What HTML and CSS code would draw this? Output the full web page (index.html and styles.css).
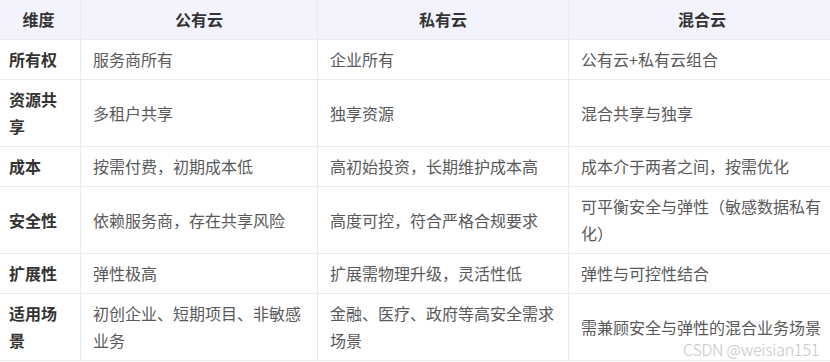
FILE: index.html
```html
<!DOCTYPE html>
<html lang="zh-CN">
<head>
<meta charset="utf-8">
<link rel="stylesheet" href="styles.css">
</head>
<body>
<div class="wrap">
<table class="cmp">
  <colgroup>
    <col class="c1"><col class="c2"><col class="c3"><col class="c4">
  </colgroup>
  <thead>
    <tr><th>维度</th><th>公有云</th><th>私有云</th><th>混合云</th></tr>
  </thead>
  <tbody>
    <tr><td class="key">所有权</td><td>服务商所有</td><td>企业所有</td><td>公有云+私有云组合</td></tr>
    <tr><td class="key">资源共享</td><td>多租户共享</td><td>独享资源</td><td>混合共享与独享</td></tr>
    <tr><td class="key">成本</td><td>按需付费，初期成本低</td><td>高初始投资，长期维护成本高</td><td>成本介于两者之间，按需优化</td></tr>
    <tr><td class="key">安全性</td><td>依赖服务商，存在共享风险</td><td>高度可控，符合严格合规要求</td><td>可平衡安全与弹性（敏感数据私有化）</td></tr>
    <tr><td class="key">扩展性</td><td>弹性极高</td><td>扩展需物理升级，灵活性低</td><td>弹性与可控性结合</td></tr>
    <tr><td class="key">适用场景</td><td>初创企业、短期项目、非敏感业务</td><td>金融、医疗、政府等高安全需求场景</td><td>需兼顾安全与弹性的混合业务场景</td></tr>
  </tbody>
</table>
<div class="watermark">CSDN @weisian151</div>
</div>
</body>
</html>
```
FILE: styles.css
```css
html, body {
  margin: 0;
  padding: 0;
  background: #ffffff;
  overflow: hidden;
}
body {
  font-family: "Noto Sans CJK SC", "Noto Sans", sans-serif;
  font-size: 16px;
}
.wrap {
  position: relative;
  width: 830px;
  height: 362px;
  overflow: hidden;
}
.cmp {
  border-collapse: collapse;
  table-layout: fixed;
  width: 839px;
  margin-left: -4px;
}
.c1 { width: 84px; }
.c2 { width: 237px; }
.c3 { width: 251px; }
.c4 { width: 267px; }
.cmp th, .cmp td {
  padding: 6px 12px;
  line-height: 27px;
  border: 1px solid #e9e9f1;
  vertical-align: middle;
  text-align: left;
}
.cmp tr:first-child th { border-top: none; }
.cmp th {
  background: #f3f3fd;
  color: #333333;
  font-weight: 700;
  text-align: center;
}
.cmp td {
  color: #595959;
}
.cmp td.key {
  color: #333333;
  font-weight: 700;
}
.watermark {
  position: absolute;
  left: 683px;
  top: 342px;
  color: #c4c4c4;
  font-size: 16px;
  font-weight: 300;
  line-height: 14px;
  letter-spacing: -0.2px;
}
```
